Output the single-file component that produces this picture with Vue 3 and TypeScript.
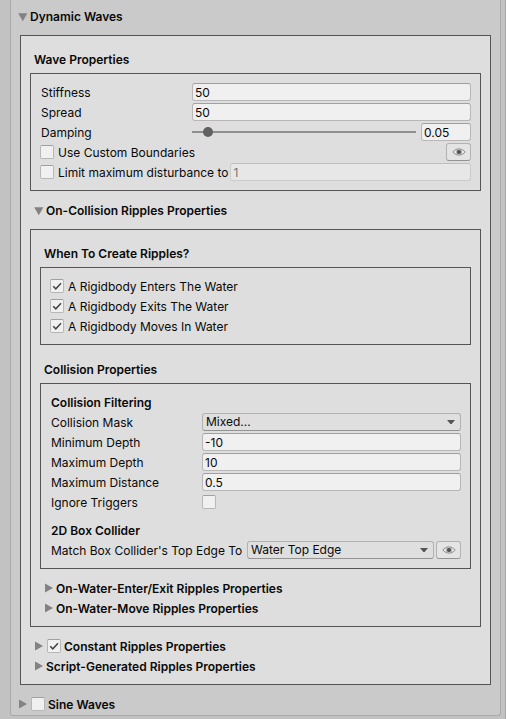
<script setup lang="ts">
import { reactive } from 'vue'

const wave = reactive({
  stiffness: '50',
  spread: '50',
  damping: '0.05',
  useCustomBoundaries: false,
  limitDisturbance: false,
  maxDisturbance: '1',
})

const triggers = reactive([
  { id: 'enter', label: 'A Rigidbody Enters The Water', on: true },
  { id: 'exit', label: 'A Rigidbody Exits The Water', on: true },
  { id: 'move', label: 'A Rigidbody Moves In Water', on: true },
])

const filters = reactive([
  { id: 'min-depth', label: 'Minimum Depth', value: '-10' },
  { id: 'max-depth', label: 'Maximum Depth', value: '10' },
  { id: 'max-distance', label: 'Maximum Distance', value: '0.5' },
])

const collision = reactive({ mask: 'Mixed...', ignoreTriggers: false, topEdge: 'Water Top Edge' })
const enabled = reactive({ constant: true, sine: false })
</script>

<template>
  <main class="inspector">
    <section class="panel">
      <div class="row foldout">
        <button type="button" class="fold" aria-expanded="true">
          <svg class="tri" viewBox="0 0 10 10"><path d="M0.2 1.2h9.2L4.8 9.2z" /></svg>Dynamic Waves
        </button>
      </div>

      <div class="box outer">
        <h2 class="row title">Wave Properties</h2>
        <div class="box rows wave">
          <div class="row">
            <label class="name" for="stiffness">Stiffness</label>
            <input id="stiffness" v-model="wave.stiffness" class="field" type="text" />
          </div>
          <div class="row">
            <label class="name" for="spread">Spread</label>
            <input id="spread" v-model="wave.spread" class="field" type="text" />
          </div>
          <div class="row">
            <label class="name" for="damping">Damping</label>
            <input id="damping" v-model="wave.damping" class="slider" type="range" min="0" max="1" step="0.01" />
            <input v-model="wave.damping" class="field number" type="text" aria-label="Damping" />
          </div>
          <div class="row">
            <label class="toggle"><input v-model="wave.useCustomBoundaries" type="checkbox" />Use Custom Boundaries</label>
            <button type="button" class="eye push" aria-label="Preview">
              <svg viewBox="0 0 14 8">
                <path class="lid" d="M0.8 4C2.6 1.9 4.6 0.9 7 0.9S11.4 1.9 13.2 4C11.4 6.1 9.4 7.1 7 7.1S2.6 6.1 0.8 4z" />
                <circle class="ring" cx="7" cy="4" r="3" />
                <circle class="pupil" cx="7" cy="4" r="2" />
              </svg>
            </button>
          </div>
          <div class="row">
            <label class="toggle"><input v-model="wave.limitDisturbance" type="checkbox" />Limit maximum disturbance to</label>
            <input v-model="wave.maxDisturbance" class="field limit" type="text" aria-label="Maximum disturbance" :disabled="!wave.limitDisturbance" />
          </div>
        </div>

        <div class="row foldout nested">
          <button type="button" class="fold" aria-expanded="true">
            <svg class="tri" viewBox="0 0 10 10"><path d="M0.2 1.2h9.2L4.8 9.2z" /></svg>On-Collision Ripples Properties
          </button>
        </div>

        <div class="box outer">
          <h3 class="row title">When To Create Ripples?</h3>
          <div class="box rows">
            <div v-for="t in triggers" :key="t.id" class="row">
              <label class="toggle"><input v-model="t.on" type="checkbox" />{{ t.label }}</label>
            </div>
          </div>

          <h3 class="row title later">Collision Properties</h3>
          <div class="box rows">
            <h4 class="row subtitle">Collision Filtering</h4>
            <div class="row">
              <label class="name" for="mask">Collision Mask</label>
              <span class="drop">
                <select id="mask" v-model="collision.mask"><option>Mixed...</option></select>
                <svg class="arrow" viewBox="0 0 8 4"><path d="M0 0h8L4.6 4H3.4z" /></svg>
              </span>
            </div>
            <div v-for="f in filters" :key="f.id" class="row">
              <label class="name" :for="f.id">{{ f.label }}</label>
              <input :id="f.id" v-model="f.value" class="field" type="text" />
            </div>
            <div class="row">
              <label class="name" for="ignore">Ignore Triggers</label>
              <input id="ignore" v-model="collision.ignoreTriggers" type="checkbox" />
            </div>
            <h4 class="row subtitle spaced">2D Box Collider</h4>
            <div class="row">
              <label class="name wide" for="edge">Match Box Collider's Top Edge To</label>
              <span class="drop">
                <select id="edge" v-model="collision.topEdge"><option>Water Top Edge</option></select>
                <svg class="arrow" viewBox="0 0 8 4"><path d="M0 0h8L4.6 4H3.4z" /></svg>
              </span>
              <button type="button" class="eye" aria-label="Preview">
                <svg viewBox="0 0 14 8">
                  <path class="lid" d="M0.8 4C2.6 1.9 4.6 0.9 7 0.9S11.4 1.9 13.2 4C11.4 6.1 9.4 7.1 7 7.1S2.6 6.1 0.8 4z" />
                  <circle class="ring" cx="7" cy="4" r="3" />
                  <circle class="pupil" cx="7" cy="4" r="2" />
                </svg>
              </button>
            </div>
          </div>

          <div class="closed">
            <div class="row foldout">
              <button type="button" class="fold" aria-expanded="false">
                <svg class="tri" viewBox="0 0 10 10"><path d="M1 0.4v9.2L9 5z" /></svg>On-Water-Enter/Exit Ripples Properties
              </button>
            </div>
            <div class="row foldout">
              <button type="button" class="fold" aria-expanded="false">
                <svg class="tri" viewBox="0 0 10 10"><path d="M1 0.4v9.2L9 5z" /></svg>On-Water-Move Ripples Properties
              </button>
            </div>
          </div>
        </div>

        <div class="closed">
          <div class="row foldout">
            <button type="button" class="fold" aria-label="Expand constant ripples" aria-expanded="false">
              <svg class="tri" viewBox="0 0 10 10"><path d="M1 0.4v9.2L9 5z" /></svg>
            </button>
            <label class="toggle strong"><input v-model="enabled.constant" type="checkbox" />Constant Ripples Properties</label>
          </div>
          <div class="row foldout">
            <button type="button" class="fold" aria-expanded="false">
              <svg class="tri" viewBox="0 0 10 10"><path d="M1 0.4v9.2L9 5z" /></svg>Script-Generated Ripples Properties
            </button>
          </div>
        </div>
      </div>

      <div class="closed last">
        <div class="row foldout">
          <button type="button" class="fold" aria-label="Expand sine waves" aria-expanded="false">
            <svg class="tri" viewBox="0 0 10 10"><path d="M1 0.4v9.2L9 5z" /></svg>
          </button>
          <label class="toggle strong"><input v-model="enabled.sine" type="checkbox" />Sine Waves</label>
        </div>
      </div>
    </section>
  </main>
</template>

<style>
body {
  background: #c2c2c2;
}
</style>

<style scoped>
* {
  box-sizing: border-box;
}

.inspector {
  min-height: 100vh;
  padding: 0 4px 3px 10px;
  border-right: 1px solid #a8a8a8;
  color: #090909;
  font: 12px/18px Inter, sans-serif;
}

.panel {
  padding: 8px 9px 2px;
  border: 1px solid #a9a9a9;
  border-top: 0;
  border-radius: 0 0 3px 3px;
  background: #cacaca;
}

.box {
  border: 1px solid #555;
  background: #dedede;
}

.outer {
  margin-top: 9px;
  padding: 15px 9px 9px;
}

.rows {
  display: flex;
  flex-direction: column;
  gap: 2px;
  margin-top: 4px;
  padding: 9px;
}

.row {
  display: flex;
  align-items: center;
  height: 18px;
  margin: 0;
  white-space: nowrap;
}

.title,
.subtitle {
  font-size: 12px;
  font-weight: 600;
}

.title {
  padding-left: 4px;
}

.later {
  margin-top: 16px;
}

.subtitle {
  align-items: flex-start;
  padding-left: 1px;
  line-height: 20px;
}

.spaced {
  margin-top: 8px;
}

.nested {
  margin-top: 11px;
}

.closed {
  display: flex;
  flex-direction: column;
  gap: 2px;
  margin-top: 10px;
}

.panel > .foldout,
.last {
  margin-left: -6px;
}

.fold {
  display: flex;
  align-items: flex-start;
  height: 18px;
  padding: 0 0 0 4px;
  border: 0;
  background: none;
  color: inherit;
  font: inherit;
  font-weight: 600;
}

.closed .fold {
  line-height: 20px;
}

.tri {
  width: 10px;
  height: 10px;
  margin: 4px 2px 0 0;
  fill: #828282;
}

.name {
  flex: 0 0 152px;
  align-self: flex-start;
  padding-left: 1px;
  line-height: 20px;
}

.name.wide {
  flex-basis: 197px;
}

.toggle {
  display: flex;
  align-items: flex-start;
  align-self: flex-start;
  gap: 4px;
  line-height: 20px;
}

.toggle input {
  margin-top: 2px;
}

.strong {
  margin-left: 1px;
  gap: 3px;
  font-weight: 600;
}

.field {
  flex: 1;
  min-width: 0;
  height: 18px;
  padding: 1px 3px 0 2px;
  border: 1px solid #b7b7b7;
  border-top-color: #a0a0a0;
  border-radius: 3px;
  background: #f0f0f0;
  color: #090909;
  font: inherit;
}

.field:disabled {
  border-color: #cbcbcb;
  border-top-color: #bfbfbf;
  background: #e7e7e7;
  color: #747474;
}

.limit {
  margin-left: 2px;
}

.number {
  flex: 0 0 50px;
  margin-left: 5px;
}

input[type='checkbox'] {
  flex: none;
  width: 14px;
  height: 14px;
  margin: 0;
  border: 1px solid #b7b7b7;
  border-top-color: #a0a0a0;
  border-radius: 2px;
  appearance: none;
  background: #f0f0f0;
}

.toggle input[type='checkbox'] {
  margin-top: 2px;
}

input[type='checkbox']:checked {
  background: #f0f0f0 url("data:image/svg+xml,%3Csvg xmlns='http://www.w3.org/2000/svg' viewBox='0 0 12 12'%3E%3Cpath d='M2.2 6.2l2.6 2.6 5.2-5.6' fill='none' stroke='%23444' stroke-width='1.5'/%3E%3C/svg%3E");
}

.slider {
  flex: 1;
  min-width: 0;
  height: 18px;
  margin: 0;
  appearance: none;
  background: linear-gradient(#8f8f8f, #8f8f8f) center / 100% 2px no-repeat;
}

.slider::-webkit-slider-thumb {
  width: 10px;
  height: 10px;
  border-radius: 50%;
  appearance: none;
  background: #616161;
}

.drop {
  position: relative;
  display: flex;
  flex: 1;
  min-width: 0;
}

select {
  width: 100%;
  height: 18px;
  padding: 0 20px 0 3px;
  border: 1px solid #b2b2b2;
  border-bottom-color: #939393;
  border-radius: 3px;
  appearance: none;
  background: #dfdfdf;
  color: #090909;
  font: inherit;
  line-height: 16px;
}

.arrow {
  position: absolute;
  top: 7px;
  right: 6px;
  width: 8px;
  height: 4px;
  fill: #555;
  pointer-events: none;
}

.eye {
  display: flex;
  flex: 0 0 25px;
  align-items: center;
  justify-content: center;
  height: 18px;
  margin-left: 2px;
  padding: 0;
  border: 1px solid #b2b2b2;
  border-bottom-color: #939393;
  border-radius: 3px;
  background: #e4e4e4;
}

.eye svg {
  width: 14px;
  height: 8px;
}

.push {
  margin-left: auto;
}

.lid {
  fill: none;
  stroke: #8c8c8c;
  stroke-width: 1;
}

.ring {
  fill: #b0b0b0;
}

.pupil {
  fill: #505050;
}
</style>
